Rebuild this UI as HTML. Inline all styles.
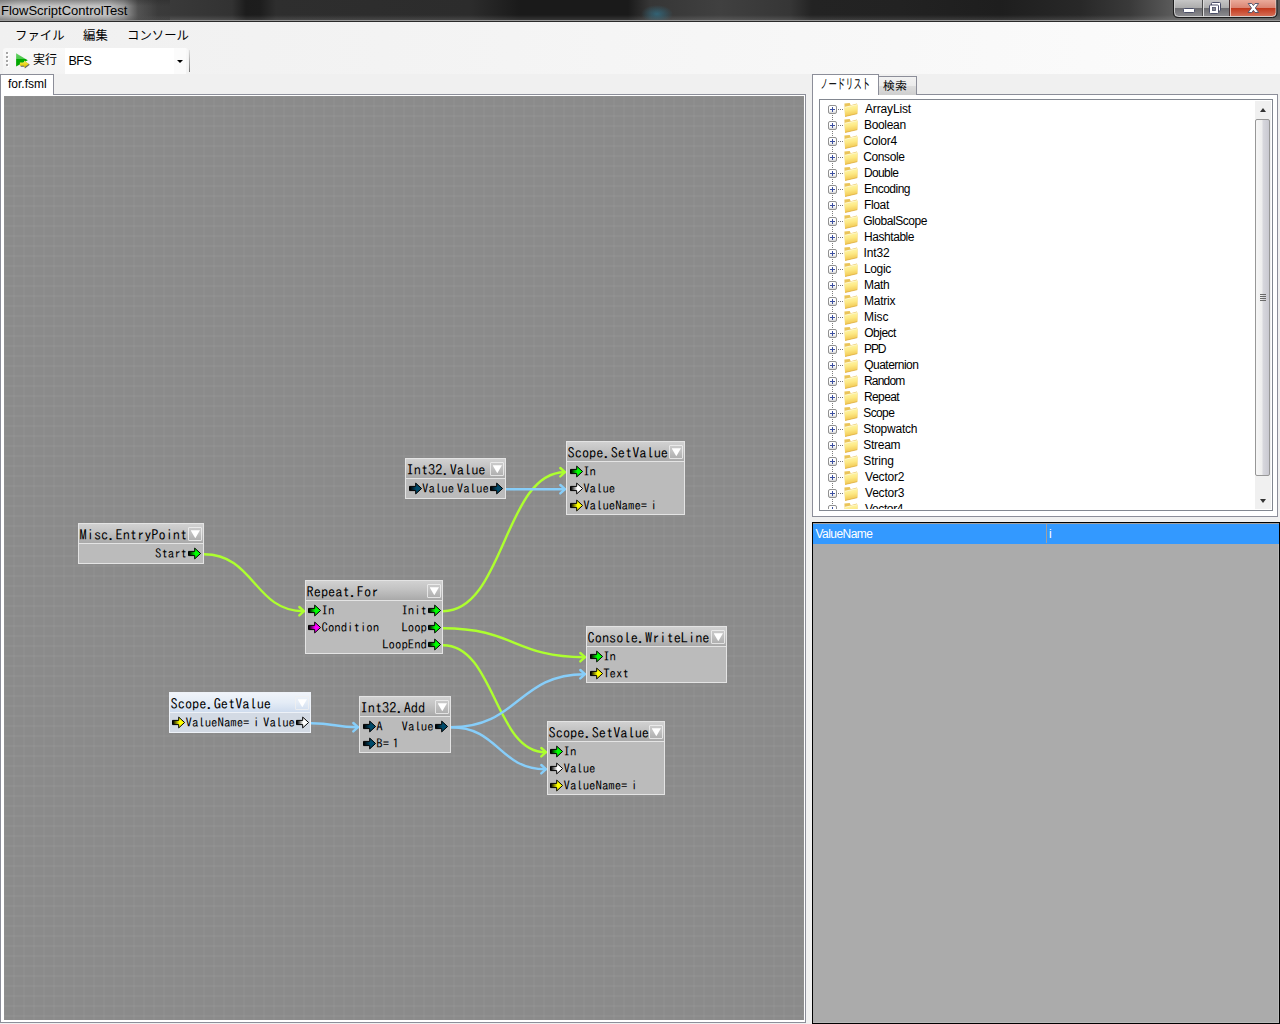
<!DOCTYPE html>
<html lang="ja"><head><meta charset="utf-8"><title>FlowScriptControlTest</title>
<style>
html,body{margin:0;padding:0}
body{width:1280px;height:1024px;overflow:hidden;position:relative;background:#f0f0f0;font-family:"Liberation Sans","Noto Sans CJK JP",sans-serif;font-size:12px;color:#000}
div,span,svg,i{position:absolute;box-sizing:content-box}
#title{left:0;top:0;width:1280px;height:20px;background:radial-gradient(ellipse 16px 9px at 657px 14px,rgba(48,128,158,.6),rgba(48,128,158,0)),linear-gradient(180deg,rgba(255,255,255,0) 15px,rgba(255,255,255,.12) 20px),linear-gradient(90deg,#343434 0,#3c3c3c 150px,#323232 232px,#1c1c1c 246px,#1d1d1d 260px,#2e2e2e 276px,#2c2c2c 470px,#1a1a1a 520px,#1a1a1a 628px,#363636 650px,#404040 720px,#363636 790px,#232323 812px,#222 900px,#1e1e1e 1000px,#282828 1080px,#3a3a3a 1130px,#5a5a5a 1172px,#585858 1280px)}
#tglow{left:0;top:0;width:170px;height:20px;background:linear-gradient(180deg,rgba(40,40,40,.38) 0,rgba(40,40,40,0) 6px,rgba(40,40,40,0) 15px,rgba(40,40,40,.3) 20px),linear-gradient(90deg,#b0b0b0 0,#c3c3c3 18px,#c1c1c1 108px,rgba(170,170,170,.85) 124px,rgba(110,110,110,.45) 138px,rgba(60,60,60,0) 158px)}
#ttext{left:1px;top:3px;font-size:13px;line-height:16px;color:#000;white-space:nowrap}
#tline1{left:0;top:20px;width:1280px;height:1px;background:#9a9a9a}
#tline2{left:0;top:21px;width:1280px;height:1px;background:#2a2a2a}
#menubar{left:0;top:22px;width:1280px;height:52px;background:linear-gradient(90deg,#f0f0f0 0,#f4f4f4 40%,#fcfcfc 100%)}
.mi{top:27.5px;font-size:12.4px;line-height:16px;white-space:nowrap}
#tb{left:3px;top:48px;width:185px;height:26px;background:linear-gradient(180deg,#f9f9f9,#f3f3f3);border-radius:3px 3px 3px 0}
#combo{left:65px;top:48px;width:121px;height:26px;background:#fff}
#canvas{left:4px;top:96px;width:800px;height:924px;background-color:#8b8b8b;
background-image:linear-gradient(90deg,rgba(255,255,255,.022) 1px,transparent 1px,transparent 9px,rgba(255,255,255,.022) 9px),linear-gradient(180deg,rgba(255,255,255,.032) 1px,transparent 1px,transparent 9px,rgba(255,255,255,.032) 9px);background-size:10px 10px;overflow:hidden}
.node{border:1px solid #e4e4e4;background:#bbb;font-family:"IPAGothic","Liberation Mono",monospace}
.node .hd{left:0;top:0;right:0;height:19px;background:linear-gradient(180deg,#d1d1d1 0,#c2c2c2 45%,#a9a9a9 100%);border-bottom:1px solid #e4e4e4}
.node.sel{background:#d3dae4;border-color:#eef2f8}
.node.sel .hd{background:linear-gradient(180deg,#f0f4fa 0,#e4ecf6 50%,#cfdcee 100%);border-bottom-color:#eef2f8}
.node .bd{left:0;top:0;right:0;bottom:0}
.ht{left:.6px;top:4.4px;font-size:14.35px;line-height:14px;white-space:nowrap}
.dd{right:1px;top:3px;width:12px;height:12px;border:1px solid rgba(240,240,240,.8);border-radius:1px}
.dd i{left:1.6px;top:2.2px;width:9.4px;height:8px;background:#fff;clip-path:polygon(0 0,100% 0,50% 100%)}
.pt{font-size:12.8px;line-height:16px;white-space:nowrap;word-spacing:-3px}
.ar{overflow:visible}
#tb .grip{left:3px;top:4px;width:2px;height:2px;background:#a6a6a6;box-shadow:1px 1px 0 #fff,0 4px 0 #a6a6a6,1px 5px 0 #fff,0 8px 0 #a6a6a6,1px 9px 0 #fff,0 12px 0 #a6a6a6,1px 13px 0 #fff}
#run{left:33px;top:52px;font-size:12px;line-height:16px;white-space:nowrap}
#bfs{left:68.5px;top:53px;letter-spacing:-.5px;font-size:12.5px;line-height:16px;white-space:nowrap}
#cbtn{left:174px;top:48px;width:12px;height:26px;background:#fbfbfb}
#carrow{left:176.6px;top:60.2px;width:0;height:0;border-left:3px solid transparent;border-right:3px solid transparent;border-top:3.2px solid #000}
#tbsep{left:189px;top:50px;width:1px;height:22px;background:linear-gradient(180deg,rgba(130,130,130,.15),rgba(110,110,110,.95))}
#ltabpage{left:0;top:94px;width:804px;height:927px;border:1px solid #8c8e99;background:#fff}
#ltab{left:0;top:74px;width:52px;height:20px;border:1px solid #8c8e99;border-bottom:none;background:#fff}
.gui{font-family:"Liberation Sans","IPAGothic",sans-serif;font-size:12px;letter-spacing:-.5px;white-space:nowrap;line-height:14px}
#ltabt{left:8px;top:77px}
#rtabpage{left:812px;top:94px;width:464px;height:421px;border:1px solid #8c8e99;background:#fff}
#rtab1{left:812px;top:74px;width:65px;height:20px;border:1px solid #8c8e99;border-bottom:none;background:#fff}
#rtab2{left:879px;top:76px;width:37px;height:18px;border:1px solid #8c8e99;border-left:none;border-bottom:none;background:linear-gradient(180deg,#f2f2f2 0,#ebebeb 50%,#dddddd 50%,#cfcfcf 100%)}
.jp{font-family:"Liberation Sans","IPAGothic","Noto Sans CJK JP",sans-serif;font-size:12px;line-height:14px;white-space:nowrap}
#rt1{left:819.5px;top:76.5px;font-size:14px;line-height:15px;transform-origin:0 0;transform:scaleX(.6)}
#rt2{left:883px;top:78.5px}
#tree{left:819px;top:99px;width:452px;height:410px;border:1px solid #828790;background:#fff;overflow:hidden}
#tree:after{content:"";position:absolute;left:0;right:0;bottom:0;height:1px;background:#fff}
.ti{left:0;height:16px;width:400px}
.pm{left:8px;top:4px;width:7px;height:7px;border:1px solid #919191;border-radius:2px;background:linear-gradient(180deg,#fff 0,#fff 55%,#d8d8d8 100%)}
.pm:before{content:"";position:absolute;left:1px;top:3px;width:5px;height:1px;background:#3c50a0}
.pm:after{content:"";position:absolute;left:3px;top:1px;width:1px;height:5px;background:#3c50a0}
.dl{left:18px;top:8px;width:5px;height:1px;background-image:linear-gradient(90deg,#7c7c7c 1px,transparent 1px);background-size:2px 1px}
.dv{left:12px;top:14px;width:1px;height:6px;background-image:linear-gradient(180deg,#7c7c7c 1px,transparent 1px);background-size:1px 2px}
.fo{left:23px;top:1px}
.tt{left:44px;top:1px}
#sb{left:1255px;top:101px;width:16px;height:408px;background:#f0f0f0}
#thumb{left:0;top:18px;width:13px;height:355px;border:1px solid #979797;border-radius:2px;background:linear-gradient(90deg,#f6f6f6 0,#eeeeee 45%,#d6d6dc 55%,#c9c9d1 100%)}
#thumb i{left:4px;top:174px;width:6px;height:1px;background:#6a6a6a;box-shadow:0 2px 0 #6a6a6a,0 4px 0 #6a6a6a,0 6px 0 #6a6a6a}
.sa{left:5px;width:0;height:0;border-left:3.5px solid transparent;border-right:3.5px solid transparent}
#pg{left:812px;top:522px;width:466px;height:500px;border:1px solid #000;background:#ababab;box-shadow:inset -1px -1px 0 #b9b9b9}
#pgrow{left:0;top:0;width:466px;height:20px;background:#3399ff;border-top:1px solid #a0a0a0}
#pgdiv{left:233px;top:0;width:1px;height:20px;background:#a0a0a0}
.pgt{color:#fff;top:3.5px}
.wb{top:0;height:17px}
#wires{left:0;top:0}
#wires path{fill:none;stroke-width:2.4;stroke-linecap:round;stroke-linejoin:round}
</style></head><body>
<svg width="0" height="0" style="position:absolute"><defs><linearGradient id="gg" x1="0" x2="1" y1="0" y2="0"><stop offset="0.04" stop-color="#000"/><stop offset="0.55" stop-color="#00ff00"/></linearGradient><linearGradient id="gm" x1="0" x2="1" y1="0" y2="0"><stop offset="0.04" stop-color="#000"/><stop offset="0.55" stop-color="#ff00ff"/></linearGradient><linearGradient id="gt" x1="0" x2="1" y1="0" y2="0"><stop offset="0.04" stop-color="#000"/><stop offset="0.55" stop-color="#004a6a"/></linearGradient><linearGradient id="gw" x1="0" x2="1" y1="0" y2="0"><stop offset="0.04" stop-color="#000"/><stop offset="0.55" stop-color="#ffffff"/></linearGradient><linearGradient id="gy" x1="0" x2="1" y1="0" y2="0"><stop offset="0.04" stop-color="#000"/><stop offset="0.55" stop-color="#ffff00"/></linearGradient>
<linearGradient id="fg" x1="0" y1="0" x2="0.15" y2="1"><stop offset="0" stop-color="#fffab4"/><stop offset=".5" stop-color="#fde985"/><stop offset="1" stop-color="#f1c650"/></linearGradient>

</defs></svg>
<div id="title"><div id="tglow"></div><span id="ttext">FlowScriptControlTest</span></div>
<div id="tline1"></div><div id="tline2"></div>
<div id="menubar"></div>
<span class="mi" style="left:15px">ファイル</span><span class="mi" style="left:83px">編集</span><span class="mi" style="left:127px">コンソール</span>
<svg id="wbtns" style="left:1170px;top:0" width="110" height="20" viewBox="1170 0 110 20">
<defs><linearGradient id="wg" x1="0" y1="0" x2="0" y2="1"><stop offset="0" stop-color="#c6c6c6"/><stop offset=".46" stop-color="#acacac"/><stop offset=".48" stop-color="#6c6c70"/><stop offset="1" stop-color="#8e8e92"/></linearGradient>
<linearGradient id="wr" x1="0" y1="0" x2="0" y2="1"><stop offset="0" stop-color="#eaaa9a"/><stop offset=".46" stop-color="#da8472"/><stop offset=".48" stop-color="#c2371b"/><stop offset="1" stop-color="#d8745c"/></linearGradient>
<clipPath id="wc"><path d="M1174.5 -2V12.5Q1174.5 16.5 1178.5 16.5H1272Q1276 16.5 1276 12.5V-2Z"/></clipPath></defs>
<g clip-path="url(#wc)"><rect x="1174" y="0" width="29" height="17" fill="url(#wg)"/><rect x="1203" y="0" width="27" height="17" fill="url(#wg)"/><rect x="1230" y="0" width="47" height="17" fill="url(#wr)"/>
<rect x="1202" y="0" width="1" height="17" fill="#4a4a4a"/><rect x="1203" y="0" width="1" height="17" fill="#dcdcdc"/><rect x="1229" y="0" width="1" height="17" fill="#4a3030"/><rect x="1230" y="0" width="1" height="17" fill="#f0c0b4"/></g>
<path d="M1174.5 -2V12.5Q1174.5 16.5 1178.5 16.5H1272Q1276 16.5 1276 12.5V-2" fill="none" stroke="#e4e4e4" stroke-width="1" opacity=".8"/>
<path d="M1173.5 -2V13Q1173.5 17.5 1178 17.5H1272.5Q1277 17.5 1277 13V-2" fill="none" stroke="#1c1c1c" stroke-width="1"/>
<rect x="1183.5" y="8.5" width="11" height="4" rx="1" fill="#fff" stroke="#4b4f68" stroke-width="1"/>
<rect x="1211.5" y="2.5" width="9" height="8.5" rx="1" fill="#fff" stroke="#4b4f68" stroke-width="1"/>
<rect x="1209.5" y="5" width="9" height="8.5" rx="1" fill="#fff" stroke="#4b4f68" stroke-width="1"/>
<rect x="1212.5" y="7.5" width="3" height="3" fill="#888c90" stroke="#4b4f68" stroke-width=".8"/>
<path d="M1248.2 3.5H1251.8L1253.4 5.6L1255 3.5H1258.6L1255.3 8L1258.7 12.5H1255L1253.4 10.3L1251.8 12.5H1248.1L1251.5 8Z" fill="#fff" stroke="#4b4f68" stroke-width=".9" stroke-linejoin="round"/>
</svg>
<div id="tb"><i class="grip"></i></div><div id="combo"></div><div id="cbtn"></div><i id="carrow"></i><div id="tbsep"></div>
<svg style="left:15px;top:53px" width="16" height="16" viewBox="0 0 16 16"><defs><linearGradient id="pg1" x1="0" y1="0" x2="0" y2="1"><stop offset="0" stop-color="#66d266"/><stop offset=".4" stop-color="#4ec84e"/><stop offset=".42" stop-color="#00aa00"/><stop offset="1" stop-color="#00a400"/></linearGradient><linearGradient id="pg2" x1="0" y1="0" x2="0" y2="1"><stop offset="0" stop-color="#fbef5a"/><stop offset=".5" stop-color="#ecd820"/><stop offset="1" stop-color="#cdb400"/></linearGradient></defs><path d="M1.1 0.3L12.8 7.2L1.1 13.6Z" fill="url(#pg1)"/><path d="M5.7 10.2H9.8V8.2L14.8 11.8L9.8 15.4V13.7H5.7Z" fill="#333" opacity=".75"/><path d="M4.9 9.5H9V7.4L13.9 11L9 14.7V12.8H4.9Z" fill="url(#pg2)"/></svg>
<span id="run" class="jp" style="font-family:'Liberation Sans','Noto Sans CJK JP',sans-serif">実行</span><span id="bfs">BFS</span>
<div id="ltabpage"></div><div id="ltab"></div><span id="ltabt" class="gui" style="letter-spacing:0">for.fsml</span>
<div id="rtabpage"></div><div id="rtab2"></div><div id="rtab1"></div>
<span id="rt1" class="jp">ノードリスト</span><span id="rt2" class="jp">検索</span>
<div id="tree"><div class="ti" style="top:1px"><span class="pm"></span><i class="dl"></i><i class="dv"></i><svg class="fo" width="16" height="16" viewBox="0 0 16 16"><path d="M1.4 1.5L6.7 1L7.7 3.3L13.9 1.5L14.4 3V11.5L2 14.4Z" fill="#eac458"/><path d="M1.6 5.3L14.5 2.5L14.2 11.7L2.1 14.5Z" fill="url(#fg)"/><path d="M1.6 5.3L14.5 2.5" stroke="#fffbe0" stroke-width=".8" fill="none"/><path d="M2.1 14.5L14.2 11.7" stroke="#dcae42" stroke-width=".7" fill="none"/></svg><span class="tt gui" style="left:45.0px;letter-spacing:-0.15px">ArrayList</span></div><div class="ti" style="top:17px"><span class="pm"></span><i class="dl"></i><i class="dv"></i><svg class="fo" width="16" height="16" viewBox="0 0 16 16"><path d="M1.4 1.5L6.7 1L7.7 3.3L13.9 1.5L14.4 3V11.5L2 14.4Z" fill="#eac458"/><path d="M1.6 5.3L14.5 2.5L14.2 11.7L2.1 14.5Z" fill="url(#fg)"/><path d="M1.6 5.3L14.5 2.5" stroke="#fffbe0" stroke-width=".8" fill="none"/><path d="M2.1 14.5L14.2 11.7" stroke="#dcae42" stroke-width=".7" fill="none"/></svg><span class="tt gui" style="left:44.0px;letter-spacing:-0.33px">Boolean</span></div><div class="ti" style="top:33px"><span class="pm"></span><i class="dl"></i><i class="dv"></i><svg class="fo" width="16" height="16" viewBox="0 0 16 16"><path d="M1.4 1.5L6.7 1L7.7 3.3L13.9 1.5L14.4 3V11.5L2 14.4Z" fill="#eac458"/><path d="M1.6 5.3L14.5 2.5L14.2 11.7L2.1 14.5Z" fill="url(#fg)"/><path d="M1.6 5.3L14.5 2.5" stroke="#fffbe0" stroke-width=".8" fill="none"/><path d="M2.1 14.5L14.2 11.7" stroke="#dcae42" stroke-width=".7" fill="none"/></svg><span class="tt gui" style="left:43.2px;letter-spacing:-0.29px">Color4</span></div><div class="ti" style="top:49px"><span class="pm"></span><i class="dl"></i><i class="dv"></i><svg class="fo" width="16" height="16" viewBox="0 0 16 16"><path d="M1.4 1.5L6.7 1L7.7 3.3L13.9 1.5L14.4 3V11.5L2 14.4Z" fill="#eac458"/><path d="M1.6 5.3L14.5 2.5L14.2 11.7L2.1 14.5Z" fill="url(#fg)"/><path d="M1.6 5.3L14.5 2.5" stroke="#fffbe0" stroke-width=".8" fill="none"/><path d="M2.1 14.5L14.2 11.7" stroke="#dcae42" stroke-width=".7" fill="none"/></svg><span class="tt gui" style="left:43.2px;letter-spacing:-0.37px">Console</span></div><div class="ti" style="top:65px"><span class="pm"></span><i class="dl"></i><i class="dv"></i><svg class="fo" width="16" height="16" viewBox="0 0 16 16"><path d="M1.4 1.5L6.7 1L7.7 3.3L13.9 1.5L14.4 3V11.5L2 14.4Z" fill="#eac458"/><path d="M1.6 5.3L14.5 2.5L14.2 11.7L2.1 14.5Z" fill="url(#fg)"/><path d="M1.6 5.3L14.5 2.5" stroke="#fffbe0" stroke-width=".8" fill="none"/><path d="M2.1 14.5L14.2 11.7" stroke="#dcae42" stroke-width=".7" fill="none"/></svg><span class="tt gui" style="left:44.0px;letter-spacing:-0.64px">Double</span></div><div class="ti" style="top:81px"><span class="pm"></span><i class="dl"></i><i class="dv"></i><svg class="fo" width="16" height="16" viewBox="0 0 16 16"><path d="M1.4 1.5L6.7 1L7.7 3.3L13.9 1.5L14.4 3V11.5L2 14.4Z" fill="#eac458"/><path d="M1.6 5.3L14.5 2.5L14.2 11.7L2.1 14.5Z" fill="url(#fg)"/><path d="M1.6 5.3L14.5 2.5" stroke="#fffbe0" stroke-width=".8" fill="none"/><path d="M2.1 14.5L14.2 11.7" stroke="#dcae42" stroke-width=".7" fill="none"/></svg><span class="tt gui" style="left:44.0px;letter-spacing:-0.5px">Encoding</span></div><div class="ti" style="top:97px"><span class="pm"></span><i class="dl"></i><i class="dv"></i><svg class="fo" width="16" height="16" viewBox="0 0 16 16"><path d="M1.4 1.5L6.7 1L7.7 3.3L13.9 1.5L14.4 3V11.5L2 14.4Z" fill="#eac458"/><path d="M1.6 5.3L14.5 2.5L14.2 11.7L2.1 14.5Z" fill="url(#fg)"/><path d="M1.6 5.3L14.5 2.5" stroke="#fffbe0" stroke-width=".8" fill="none"/><path d="M2.1 14.5L14.2 11.7" stroke="#dcae42" stroke-width=".7" fill="none"/></svg><span class="tt gui" style="left:44.0px;letter-spacing:-0.35px">Float</span></div><div class="ti" style="top:113px"><span class="pm"></span><i class="dl"></i><i class="dv"></i><svg class="fo" width="16" height="16" viewBox="0 0 16 16"><path d="M1.4 1.5L6.7 1L7.7 3.3L13.9 1.5L14.4 3V11.5L2 14.4Z" fill="#eac458"/><path d="M1.6 5.3L14.5 2.5L14.2 11.7L2.1 14.5Z" fill="url(#fg)"/><path d="M1.6 5.3L14.5 2.5" stroke="#fffbe0" stroke-width=".8" fill="none"/><path d="M2.1 14.5L14.2 11.7" stroke="#dcae42" stroke-width=".7" fill="none"/></svg><span class="tt gui" style="left:43.2px;letter-spacing:-0.44px">GlobalScope</span></div><div class="ti" style="top:129px"><span class="pm"></span><i class="dl"></i><i class="dv"></i><svg class="fo" width="16" height="16" viewBox="0 0 16 16"><path d="M1.4 1.5L6.7 1L7.7 3.3L13.9 1.5L14.4 3V11.5L2 14.4Z" fill="#eac458"/><path d="M1.6 5.3L14.5 2.5L14.2 11.7L2.1 14.5Z" fill="url(#fg)"/><path d="M1.6 5.3L14.5 2.5" stroke="#fffbe0" stroke-width=".8" fill="none"/><path d="M2.1 14.5L14.2 11.7" stroke="#dcae42" stroke-width=".7" fill="none"/></svg><span class="tt gui" style="left:44.0px;letter-spacing:-0.44px">Hashtable</span></div><div class="ti" style="top:145px"><span class="pm"></span><i class="dl"></i><i class="dv"></i><svg class="fo" width="16" height="16" viewBox="0 0 16 16"><path d="M1.4 1.5L6.7 1L7.7 3.3L13.9 1.5L14.4 3V11.5L2 14.4Z" fill="#eac458"/><path d="M1.6 5.3L14.5 2.5L14.2 11.7L2.1 14.5Z" fill="url(#fg)"/><path d="M1.6 5.3L14.5 2.5" stroke="#fffbe0" stroke-width=".8" fill="none"/><path d="M2.1 14.5L14.2 11.7" stroke="#dcae42" stroke-width=".7" fill="none"/></svg><span class="tt gui" style="left:43.5px;letter-spacing:-0.12px">Int32</span></div><div class="ti" style="top:161px"><span class="pm"></span><i class="dl"></i><i class="dv"></i><svg class="fo" width="16" height="16" viewBox="0 0 16 16"><path d="M1.4 1.5L6.7 1L7.7 3.3L13.9 1.5L14.4 3V11.5L2 14.4Z" fill="#eac458"/><path d="M1.6 5.3L14.5 2.5L14.2 11.7L2.1 14.5Z" fill="url(#fg)"/><path d="M1.6 5.3L14.5 2.5" stroke="#fffbe0" stroke-width=".8" fill="none"/><path d="M2.1 14.5L14.2 11.7" stroke="#dcae42" stroke-width=".7" fill="none"/></svg><span class="tt gui" style="left:44.0px;letter-spacing:-0.38px">Logic</span></div><div class="ti" style="top:177px"><span class="pm"></span><i class="dl"></i><i class="dv"></i><svg class="fo" width="16" height="16" viewBox="0 0 16 16"><path d="M1.4 1.5L6.7 1L7.7 3.3L13.9 1.5L14.4 3V11.5L2 14.4Z" fill="#eac458"/><path d="M1.6 5.3L14.5 2.5L14.2 11.7L2.1 14.5Z" fill="url(#fg)"/><path d="M1.6 5.3L14.5 2.5" stroke="#fffbe0" stroke-width=".8" fill="none"/><path d="M2.1 14.5L14.2 11.7" stroke="#dcae42" stroke-width=".7" fill="none"/></svg><span class="tt gui" style="left:44.0px;letter-spacing:-0.33px">Math</span></div><div class="ti" style="top:193px"><span class="pm"></span><i class="dl"></i><i class="dv"></i><svg class="fo" width="16" height="16" viewBox="0 0 16 16"><path d="M1.4 1.5L6.7 1L7.7 3.3L13.9 1.5L14.4 3V11.5L2 14.4Z" fill="#eac458"/><path d="M1.6 5.3L14.5 2.5L14.2 11.7L2.1 14.5Z" fill="url(#fg)"/><path d="M1.6 5.3L14.5 2.5" stroke="#fffbe0" stroke-width=".8" fill="none"/><path d="M2.1 14.5L14.2 11.7" stroke="#dcae42" stroke-width=".7" fill="none"/></svg><span class="tt gui" style="left:44.0px;letter-spacing:-0.24px">Matrix</span></div><div class="ti" style="top:209px"><span class="pm"></span><i class="dl"></i><i class="dv"></i><svg class="fo" width="16" height="16" viewBox="0 0 16 16"><path d="M1.4 1.5L6.7 1L7.7 3.3L13.9 1.5L14.4 3V11.5L2 14.4Z" fill="#eac458"/><path d="M1.6 5.3L14.5 2.5L14.2 11.7L2.1 14.5Z" fill="url(#fg)"/><path d="M1.6 5.3L14.5 2.5" stroke="#fffbe0" stroke-width=".8" fill="none"/><path d="M2.1 14.5L14.2 11.7" stroke="#dcae42" stroke-width=".7" fill="none"/></svg><span class="tt gui" style="left:44.0px;letter-spacing:-0.03px">Misc</span></div><div class="ti" style="top:225px"><span class="pm"></span><i class="dl"></i><i class="dv"></i><svg class="fo" width="16" height="16" viewBox="0 0 16 16"><path d="M1.4 1.5L6.7 1L7.7 3.3L13.9 1.5L14.4 3V11.5L2 14.4Z" fill="#eac458"/><path d="M1.6 5.3L14.5 2.5L14.2 11.7L2.1 14.5Z" fill="url(#fg)"/><path d="M1.6 5.3L14.5 2.5" stroke="#fffbe0" stroke-width=".8" fill="none"/><path d="M2.1 14.5L14.2 11.7" stroke="#dcae42" stroke-width=".7" fill="none"/></svg><span class="tt gui" style="left:44.2px;letter-spacing:-0.49px">Object</span></div><div class="ti" style="top:241px"><span class="pm"></span><i class="dl"></i><i class="dv"></i><svg class="fo" width="16" height="16" viewBox="0 0 16 16"><path d="M1.4 1.5L6.7 1L7.7 3.3L13.9 1.5L14.4 3V11.5L2 14.4Z" fill="#eac458"/><path d="M1.6 5.3L14.5 2.5L14.2 11.7L2.1 14.5Z" fill="url(#fg)"/><path d="M1.6 5.3L14.5 2.5" stroke="#fffbe0" stroke-width=".8" fill="none"/><path d="M2.1 14.5L14.2 11.7" stroke="#dcae42" stroke-width=".7" fill="none"/></svg><span class="tt gui" style="left:44.0px;letter-spacing:-1.1px">PPD</span></div><div class="ti" style="top:257px"><span class="pm"></span><i class="dl"></i><i class="dv"></i><svg class="fo" width="16" height="16" viewBox="0 0 16 16"><path d="M1.4 1.5L6.7 1L7.7 3.3L13.9 1.5L14.4 3V11.5L2 14.4Z" fill="#eac458"/><path d="M1.6 5.3L14.5 2.5L14.2 11.7L2.1 14.5Z" fill="url(#fg)"/><path d="M1.6 5.3L14.5 2.5" stroke="#fffbe0" stroke-width=".8" fill="none"/><path d="M2.1 14.5L14.2 11.7" stroke="#dcae42" stroke-width=".7" fill="none"/></svg><span class="tt gui" style="left:44.3px;letter-spacing:-0.54px">Quaternion</span></div><div class="ti" style="top:273px"><span class="pm"></span><i class="dl"></i><i class="dv"></i><svg class="fo" width="16" height="16" viewBox="0 0 16 16"><path d="M1.4 1.5L6.7 1L7.7 3.3L13.9 1.5L14.4 3V11.5L2 14.4Z" fill="#eac458"/><path d="M1.6 5.3L14.5 2.5L14.2 11.7L2.1 14.5Z" fill="url(#fg)"/><path d="M1.6 5.3L14.5 2.5" stroke="#fffbe0" stroke-width=".8" fill="none"/><path d="M2.1 14.5L14.2 11.7" stroke="#dcae42" stroke-width=".7" fill="none"/></svg><span class="tt gui" style="left:44.0px;letter-spacing:-0.82px">Random</span></div><div class="ti" style="top:289px"><span class="pm"></span><i class="dl"></i><i class="dv"></i><svg class="fo" width="16" height="16" viewBox="0 0 16 16"><path d="M1.4 1.5L6.7 1L7.7 3.3L13.9 1.5L14.4 3V11.5L2 14.4Z" fill="#eac458"/><path d="M1.6 5.3L14.5 2.5L14.2 11.7L2.1 14.5Z" fill="url(#fg)"/><path d="M1.6 5.3L14.5 2.5" stroke="#fffbe0" stroke-width=".8" fill="none"/><path d="M2.1 14.5L14.2 11.7" stroke="#dcae42" stroke-width=".7" fill="none"/></svg><span class="tt gui" style="left:44.0px;letter-spacing:-0.62px">Repeat</span></div><div class="ti" style="top:305px"><span class="pm"></span><i class="dl"></i><i class="dv"></i><svg class="fo" width="16" height="16" viewBox="0 0 16 16"><path d="M1.4 1.5L6.7 1L7.7 3.3L13.9 1.5L14.4 3V11.5L2 14.4Z" fill="#eac458"/><path d="M1.6 5.3L14.5 2.5L14.2 11.7L2.1 14.5Z" fill="url(#fg)"/><path d="M1.6 5.3L14.5 2.5" stroke="#fffbe0" stroke-width=".8" fill="none"/><path d="M2.1 14.5L14.2 11.7" stroke="#dcae42" stroke-width=".7" fill="none"/></svg><span class="tt gui" style="left:43.3px;letter-spacing:-0.62px">Scope</span></div><div class="ti" style="top:321px"><span class="pm"></span><i class="dl"></i><i class="dv"></i><svg class="fo" width="16" height="16" viewBox="0 0 16 16"><path d="M1.4 1.5L6.7 1L7.7 3.3L13.9 1.5L14.4 3V11.5L2 14.4Z" fill="#eac458"/><path d="M1.6 5.3L14.5 2.5L14.2 11.7L2.1 14.5Z" fill="url(#fg)"/><path d="M1.6 5.3L14.5 2.5" stroke="#fffbe0" stroke-width=".8" fill="none"/><path d="M2.1 14.5L14.2 11.7" stroke="#dcae42" stroke-width=".7" fill="none"/></svg><span class="tt gui" style="left:43.3px;letter-spacing:-0.24px">Stopwatch</span></div><div class="ti" style="top:337px"><span class="pm"></span><i class="dl"></i><i class="dv"></i><svg class="fo" width="16" height="16" viewBox="0 0 16 16"><path d="M1.4 1.5L6.7 1L7.7 3.3L13.9 1.5L14.4 3V11.5L2 14.4Z" fill="#eac458"/><path d="M1.6 5.3L14.5 2.5L14.2 11.7L2.1 14.5Z" fill="url(#fg)"/><path d="M1.6 5.3L14.5 2.5" stroke="#fffbe0" stroke-width=".8" fill="none"/><path d="M2.1 14.5L14.2 11.7" stroke="#dcae42" stroke-width=".7" fill="none"/></svg><span class="tt gui" style="left:43.3px;letter-spacing:-0.28px">Stream</span></div><div class="ti" style="top:353px"><span class="pm"></span><i class="dl"></i><i class="dv"></i><svg class="fo" width="16" height="16" viewBox="0 0 16 16"><path d="M1.4 1.5L6.7 1L7.7 3.3L13.9 1.5L14.4 3V11.5L2 14.4Z" fill="#eac458"/><path d="M1.6 5.3L14.5 2.5L14.2 11.7L2.1 14.5Z" fill="url(#fg)"/><path d="M1.6 5.3L14.5 2.5" stroke="#fffbe0" stroke-width=".8" fill="none"/><path d="M2.1 14.5L14.2 11.7" stroke="#dcae42" stroke-width=".7" fill="none"/></svg><span class="tt gui" style="left:43.3px;letter-spacing:-0.14px">String</span></div><div class="ti" style="top:369px"><span class="pm"></span><i class="dl"></i><i class="dv"></i><svg class="fo" width="16" height="16" viewBox="0 0 16 16"><path d="M1.4 1.5L6.7 1L7.7 3.3L13.9 1.5L14.4 3V11.5L2 14.4Z" fill="#eac458"/><path d="M1.6 5.3L14.5 2.5L14.2 11.7L2.1 14.5Z" fill="url(#fg)"/><path d="M1.6 5.3L14.5 2.5" stroke="#fffbe0" stroke-width=".8" fill="none"/><path d="M2.1 14.5L14.2 11.7" stroke="#dcae42" stroke-width=".7" fill="none"/></svg><span class="tt gui" style="left:45.0px;letter-spacing:-0.2px">Vector2</span></div><div class="ti" style="top:385px"><span class="pm"></span><i class="dl"></i><i class="dv"></i><svg class="fo" width="16" height="16" viewBox="0 0 16 16"><path d="M1.4 1.5L6.7 1L7.7 3.3L13.9 1.5L14.4 3V11.5L2 14.4Z" fill="#eac458"/><path d="M1.6 5.3L14.5 2.5L14.2 11.7L2.1 14.5Z" fill="url(#fg)"/><path d="M1.6 5.3L14.5 2.5" stroke="#fffbe0" stroke-width=".8" fill="none"/><path d="M2.1 14.5L14.2 11.7" stroke="#dcae42" stroke-width=".7" fill="none"/></svg><span class="tt gui" style="left:45.0px;letter-spacing:-0.2px">Vector3</span></div><div class="ti" style="top:401px"><span class="pm"></span><i class="dl"></i><i class="dv"></i><svg class="fo" width="16" height="16" viewBox="0 0 16 16"><path d="M1.4 1.5L6.7 1L7.7 3.3L13.9 1.5L14.4 3V11.5L2 14.4Z" fill="#eac458"/><path d="M1.6 5.3L14.5 2.5L14.2 11.7L2.1 14.5Z" fill="url(#fg)"/><path d="M1.6 5.3L14.5 2.5" stroke="#fffbe0" stroke-width=".8" fill="none"/><path d="M2.1 14.5L14.2 11.7" stroke="#dcae42" stroke-width=".7" fill="none"/></svg><span class="tt gui" style="left:45.0px;letter-spacing:-0.37px">Vector4</span></div></div>
<div id="sb"><i class="sa" style="top:7px;border-bottom:4px solid #333"></i><div id="thumb"><i></i></div><i class="sa" style="top:398px;border-top:4px solid #333"></i></div>
<div id="pg"><div id="pgrow"></div><div id="pgdiv"></div><span class="gui pgt" style="left:2.5px;letter-spacing:-.55px">ValueName</span><span class="gui pgt" style="left:236px">i</span></div>
<div id="canvas">
<svg id="wires" width="800" height="924" viewBox="4 96 800 924"><path d="M204.0 554.2C254.3 554.2 254.3 611.2 303.6 611.2" stroke="#adff2f"/><path d="M299.3 607.0L304.0 611.2L299.3 615.4" stroke="#adff2f"/><path d="M443.0 611.2C504.3 611.2 504.3 472.2 564.6 472.2" stroke="#adff2f"/><path d="M560.3 468.0L565.0 472.2L560.3 476.4" stroke="#adff2f"/><path d="M443.0 628.2C514.3 628.2 514.3 657.2 584.6 657.2" stroke="#adff2f"/><path d="M580.3 653.0L585.0 657.2L580.3 661.4" stroke="#adff2f"/><path d="M443.0 645.2C494.8 645.2 494.8 752.2 545.6 752.2" stroke="#adff2f"/><path d="M541.3 748.0L546.0 752.2L541.3 756.4" stroke="#adff2f"/><path d="M506.0 489.2C535.8 489.2 535.8 489.2 564.6 489.2" stroke="#87cefa"/><path d="M560.3 485.0L565.0 489.2L560.3 493.4" stroke="#87cefa"/><path d="M311.0 723.2C334.8 723.2 334.8 727.2 357.6 727.2" stroke="#87cefa"/><path d="M353.3 723.0L358.0 727.2L353.3 731.4" stroke="#87cefa"/><path d="M451.0 727.2C518.3 727.2 518.3 674.2 584.6 674.2" stroke="#87cefa"/><path d="M580.3 670.0L585.0 674.2L580.3 678.4" stroke="#87cefa"/><path d="M451.0 727.2C498.8 727.2 498.8 769.2 545.6 769.2" stroke="#87cefa"/><path d="M541.3 765.0L546.0 769.2L541.3 773.4" stroke="#87cefa"/></svg>
<div style="left:-4px;top:-96px;width:0;height:0;overflow:visible"><div class="node" style="left:78px;top:523px;width:124px;height:39px"><div class="hd"><span class="ht">Misc.EntryPoint</span><span class="dd"><i></i></span></div><div class="bd"><svg class="ar" style="left:109px;top:23px" width="14" height="14" viewBox="0 -6.7 14 14"><path d="M0.5 -2.3H6.7V-5.6L12.6 -0.2L6.7 5.2V1.9H0.5Z" fill="url(#gg)" stroke="#000" stroke-width="1" stroke-linejoin="miter"/></svg><span class="pt r" style="right:16.0px;top:22px">Start</span></div></div><div class="node" style="left:305px;top:580px;width:136px;height:72px"><div class="hd"><span class="ht">Repeat.For</span><span class="dd"><i></i></span></div><div class="bd"><svg class="ar" style="left:2px;top:23px" width="14" height="14" viewBox="0 -6.7 14 14"><path d="M0.5 -2.3H6.7V-5.6L12.6 -0.2L6.7 5.2V1.9H0.5Z" fill="url(#gg)" stroke="#000" stroke-width="1" stroke-linejoin="miter"/></svg><span class="pt" style="left:15.5px;top:22px">In</span><svg class="ar" style="left:2px;top:40px" width="14" height="14" viewBox="0 -6.7 14 14"><path d="M0.5 -2.3H6.7V-5.6L12.6 -0.2L6.7 5.2V1.9H0.5Z" fill="url(#gm)" stroke="#000" stroke-width="1" stroke-linejoin="miter"/></svg><span class="pt" style="left:15.5px;top:39px">Condition</span><svg class="ar" style="left:122px;top:23px" width="14" height="14" viewBox="0 -6.7 14 14"><path d="M0.5 -2.3H6.7V-5.6L12.6 -0.2L6.7 5.2V1.9H0.5Z" fill="url(#gg)" stroke="#000" stroke-width="1" stroke-linejoin="miter"/></svg><span class="pt r" style="right:15.0px;top:22px">Init</span><svg class="ar" style="left:122px;top:40px" width="14" height="14" viewBox="0 -6.7 14 14"><path d="M0.5 -2.3H6.7V-5.6L12.6 -0.2L6.7 5.2V1.9H0.5Z" fill="url(#gg)" stroke="#000" stroke-width="1" stroke-linejoin="miter"/></svg><span class="pt r" style="right:15.0px;top:39px">Loop</span><svg class="ar" style="left:122px;top:57px" width="14" height="14" viewBox="0 -6.7 14 14"><path d="M0.5 -2.3H6.7V-5.6L12.6 -0.2L6.7 5.2V1.9H0.5Z" fill="url(#gg)" stroke="#000" stroke-width="1" stroke-linejoin="miter"/></svg><span class="pt r" style="right:15.0px;top:56px">LoopEnd</span></div></div><div class="node" style="left:405px;top:458px;width:99px;height:39px"><div class="hd"><span class="ht">Int32.Value</span><span class="dd"><i></i></span></div><div class="bd"><svg class="ar" style="left:2.6px;top:23px" width="14" height="14" viewBox="0 -6.7 14 14"><path d="M0.5 -2.3H6.7V-5.6L12.6 -0.2L6.7 5.2V1.9H0.5Z" fill="url(#gt)" stroke="#000" stroke-width="1" stroke-linejoin="miter"/></svg><span class="pt" style="left:16.1px;top:22px">Value</span><svg class="ar" style="left:83.8px;top:23px" width="14" height="14" viewBox="0 -6.7 14 14"><path d="M0.5 -2.3H6.7V-5.6L12.6 -0.2L6.7 5.2V1.9H0.5Z" fill="url(#gt)" stroke="#000" stroke-width="1" stroke-linejoin="miter"/></svg><span class="pt r" style="right:16.2px;top:22px">Value</span></div></div><div class="node" style="left:566px;top:441px;width:117px;height:72px"><div class="hd"><span class="ht">Scope.SetValue</span><span class="dd"><i></i></span></div><div class="bd"><svg class="ar" style="left:2.7px;top:23px" width="14" height="14" viewBox="0 -6.7 14 14"><path d="M0.5 -2.3H6.7V-5.6L12.6 -0.2L6.7 5.2V1.9H0.5Z" fill="url(#gg)" stroke="#000" stroke-width="1" stroke-linejoin="miter"/></svg><span class="pt" style="left:16.2px;top:22px">In</span><svg class="ar" style="left:2.7px;top:40px" width="14" height="14" viewBox="0 -6.7 14 14"><path d="M0.5 -2.3H6.7V-5.6L12.6 -0.2L6.7 5.2V1.9H0.5Z" fill="url(#gw)" stroke="#000" stroke-width="1" stroke-linejoin="miter"/></svg><span class="pt" style="left:16.2px;top:39px">Value</span><svg class="ar" style="left:2.7px;top:57px" width="14" height="14" viewBox="0 -6.7 14 14"><path d="M0.5 -2.3H6.7V-5.6L12.6 -0.2L6.7 5.2V1.9H0.5Z" fill="url(#gy)" stroke="#000" stroke-width="1" stroke-linejoin="miter"/></svg><span class="pt" style="left:16.2px;top:56px">ValueName= i</span></div></div><div class="node" style="left:586px;top:626px;width:139px;height:55px"><div class="hd"><span class="ht">Console.WriteLine</span><span class="dd"><i></i></span></div><div class="bd"><svg class="ar" style="left:2.7px;top:23px" width="14" height="14" viewBox="0 -6.7 14 14"><path d="M0.5 -2.3H6.7V-5.6L12.6 -0.2L6.7 5.2V1.9H0.5Z" fill="url(#gg)" stroke="#000" stroke-width="1" stroke-linejoin="miter"/></svg><span class="pt" style="left:16.2px;top:22px">In</span><svg class="ar" style="left:2.7px;top:40px" width="14" height="14" viewBox="0 -6.7 14 14"><path d="M0.5 -2.3H6.7V-5.6L12.6 -0.2L6.7 5.2V1.9H0.5Z" fill="url(#gy)" stroke="#000" stroke-width="1" stroke-linejoin="miter"/></svg><span class="pt" style="left:16.2px;top:39px">Text</span></div></div><div class="node sel" style="left:169px;top:692px;width:140px;height:39px"><div class="hd"><span class="ht">Scope.GetValue</span><span class="dd"><i></i></span></div><div class="bd"><svg class="ar" style="left:2px;top:23px" width="14" height="14" viewBox="0 -6.7 14 14"><path d="M0.5 -2.3H6.7V-5.6L12.6 -0.2L6.7 5.2V1.9H0.5Z" fill="url(#gy)" stroke="#000" stroke-width="1" stroke-linejoin="miter"/></svg><span class="pt" style="left:15.5px;top:22px">ValueName= i</span><svg class="ar" style="left:126px;top:23px" width="14" height="14" viewBox="0 -6.7 14 14"><path d="M0.5 -2.3H6.7V-5.6L12.6 -0.2L6.7 5.2V1.9H0.5Z" fill="url(#gw)" stroke="#000" stroke-width="1" stroke-linejoin="miter"/></svg><span class="pt r" style="right:15.0px;top:22px">Value</span></div></div><div class="node" style="left:359px;top:696px;width:90px;height:55px"><div class="hd"><span class="ht">Int32.Add</span><span class="dd"><i></i></span></div><div class="bd"><svg class="ar" style="left:2.8px;top:23px" width="14" height="14" viewBox="0 -6.7 14 14"><path d="M0.5 -2.3H6.7V-5.6L12.6 -0.2L6.7 5.2V1.9H0.5Z" fill="url(#gt)" stroke="#000" stroke-width="1" stroke-linejoin="miter"/></svg><span class="pt" style="left:16.3px;top:22px">A</span><svg class="ar" style="left:2.8px;top:40px" width="14" height="14" viewBox="0 -6.7 14 14"><path d="M0.5 -2.3H6.7V-5.6L12.6 -0.2L6.7 5.2V1.9H0.5Z" fill="url(#gt)" stroke="#000" stroke-width="1" stroke-linejoin="miter"/></svg><span class="pt" style="left:16.3px;top:39px">B= 1</span><svg class="ar" style="left:74.6px;top:23px" width="14" height="14" viewBox="0 -6.7 14 14"><path d="M0.5 -2.3H6.7V-5.6L12.6 -0.2L6.7 5.2V1.9H0.5Z" fill="url(#gt)" stroke="#000" stroke-width="1" stroke-linejoin="miter"/></svg><span class="pt r" style="right:16.4px;top:22px">Value</span></div></div><div class="node" style="left:547px;top:721px;width:116px;height:72px"><div class="hd"><span class="ht">Scope.SetValue</span><span class="dd"><i></i></span></div><div class="bd"><svg class="ar" style="left:2px;top:23px" width="14" height="14" viewBox="0 -6.7 14 14"><path d="M0.5 -2.3H6.7V-5.6L12.6 -0.2L6.7 5.2V1.9H0.5Z" fill="url(#gg)" stroke="#000" stroke-width="1" stroke-linejoin="miter"/></svg><span class="pt" style="left:15.5px;top:22px">In</span><svg class="ar" style="left:2px;top:40px" width="14" height="14" viewBox="0 -6.7 14 14"><path d="M0.5 -2.3H6.7V-5.6L12.6 -0.2L6.7 5.2V1.9H0.5Z" fill="url(#gw)" stroke="#000" stroke-width="1" stroke-linejoin="miter"/></svg><span class="pt" style="left:15.5px;top:39px">Value</span><svg class="ar" style="left:2px;top:57px" width="14" height="14" viewBox="0 -6.7 14 14"><path d="M0.5 -2.3H6.7V-5.6L12.6 -0.2L6.7 5.2V1.9H0.5Z" fill="url(#gy)" stroke="#000" stroke-width="1" stroke-linejoin="miter"/></svg><span class="pt" style="left:15.5px;top:56px">ValueName= i</span></div></div></div>
</div>
</body></html>
